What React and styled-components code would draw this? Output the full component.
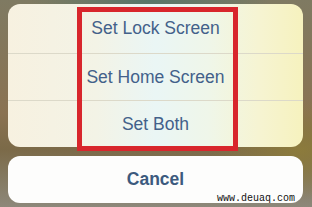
import React from "react";
import styled, { createGlobalStyle } from "styled-components";

const GlobalStyle = createGlobalStyle`
  html, body {
    margin: 0;
    padding: 0;
  }
  body {
    font-family: "Liberation Sans", Arial, sans-serif;
  }
`;

const options = ["Set Lock Screen", "Set Home Screen", "Set Both"];

const App = () => {
  return (
    <Screen>
      <GlobalStyle />
      <OptionsWrap>
        <Sheet>
          {options.map((label) => (
            <Option key={label}>{label}</Option>
          ))}
        </Sheet>
        <Highlight />
      </OptionsWrap>
      <CancelWrap>
        <CancelButton>Cancel</CancelButton>
        <Watermark>www.deuaq.com</Watermark>
      </CancelWrap>
    </Screen>
  );
};

export default App;

const Screen = styled.div`
  width: 312px;
  height: 207px;
  box-sizing: border-box;
  padding: 4px 9px 4px 8px;
  display: flex;
  flex-direction: column;
  gap: 9px;
  overflow: hidden;
  background:
    radial-gradient(ellipse 120px 30px at 150px 0px, #56766a 0%, rgba(86, 118, 106, 0) 100%),
    radial-gradient(ellipse 90px 50px at 300px 150px, #8c7b3c 0%, rgba(140, 123, 60, 0) 100%),
    linear-gradient(180deg, #7f7a62 0%, #8a7252 55%, #7b6a48 72%, #8d887a 100%);
`;

const OptionsWrap = styled.div`
  position: relative;
`;

const Sheet = styled.div`
  border-radius: 12px;
  overflow: hidden;
  display: flex;
  flex-direction: column;
  background: linear-gradient(
    90deg,
    #f7f1e0 0%,
    #f3f3e6 30%,
    #eaf6f5 50%,
    #eff6e9 68%,
    #f6f4d2 85%,
    #f6f2be 100%
  );
`;

const Option = styled.div`
  height: 46px;
  display: flex;
  align-items: center;
  justify-content: center;
  font-size: 17.5px;
  color: #43618a;
  border-bottom: 1px solid #dcd9c9;

  &:first-child {
    height: 49px;
  }

  &:last-child {
    border-bottom: none;
  }
`;

const Highlight = styled.div`
  position: absolute;
  left: 69px;
  top: 3px;
  width: 161px;
  height: 144px;
  box-sizing: border-box;
  border: 5px solid #d8262c;
  pointer-events: none;
`;

const CancelWrap = styled.div`
  position: relative;
`;

const CancelButton = styled.div`
  height: 47px;
  border-radius: 12px;
  background: #fdfdfc;
  display: flex;
  align-items: center;
  justify-content: center;
  font-size: 17.5px;
  font-weight: bold;
  color: #3c5a7e;
`;

const Watermark = styled.div`
  position: absolute;
  right: 8px;
  bottom: -1px;
  font-family: "Liberation Mono", "DejaVu Sans Mono", monospace;
  font-size: 10px;
  line-height: 11px;
  color: #111;
`;
